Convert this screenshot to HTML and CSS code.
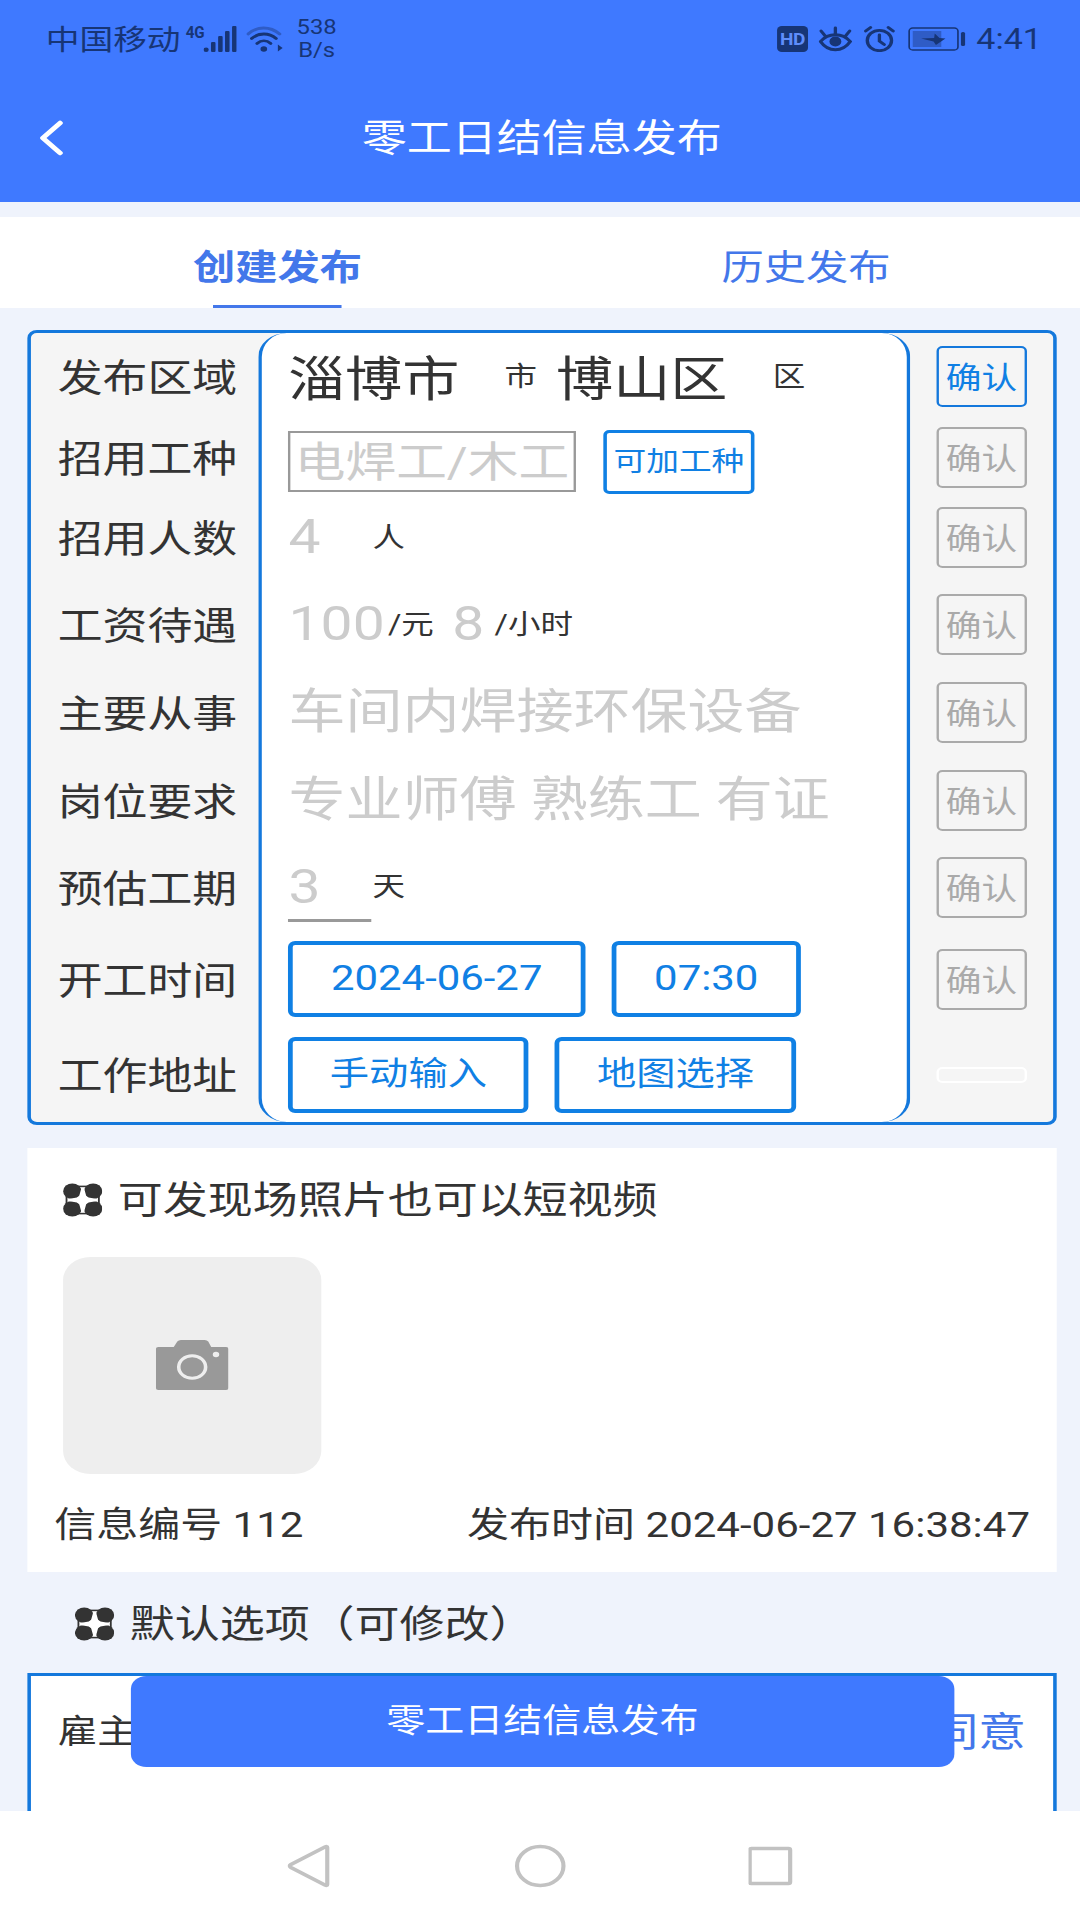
FILE: index.html
```html
<!DOCTYPE html>
<html lang="zh-CN">
<head>
  <meta charset="UTF-8">
  <title>零工日结信息发布</title>
  <meta name="viewport" content="width=device-width, initial-scale=1">
  <link rel="stylesheet" href="styles.css">
</head>
<body>
  <svg class="defs" width="0" height="0">
    <symbol id="clover" viewBox="0 0 34 34">
      <rect x="3" y="3" width="28" height="28" fill="#fff" stroke="#333" stroke-width="1.6"/>
      <circle cx="8" cy="8" r="8"/><circle cx="26" cy="8" r="8"/>
      <circle cx="8" cy="26" r="8"/><circle cx="26" cy="26" r="8"/>
      <path d="M15.8 5h2.4l1.8 7.5 2 2 7.500 1.500v2l-7.500 1.500-2 2-1.800 7.500h-2.400l-1.800-7.500-2-2L4.500 18v-2l7.500-1.500 2-2z" fill="#fff"/>
    </symbol>
  </svg>

  <div class="page">
    <!-- 状态栏 -->
    <div class="status">
      <span class="carrier">中国移动</span>
      <span class="net">4G</span>
      <svg class="signal" width="28" height="26" viewBox="0 0 28 26">
        <circle cx="2.2" cy="23.8" r="2.2"/>
        <rect x="6.3" y="16" width="3.8" height="10" rx="1"/>
        <rect x="12.3" y="10" width="3.8" height="16" rx="1"/>
        <rect x="18.1" y="5" width="3.8" height="21" rx="1"/>
        <rect x="24" y="0" width="3.8" height="26" rx="1"/>
      </svg>
      <svg class="wifi" width="31" height="26" viewBox="0 0 31 26">
        <g fill="none" stroke-width="2.8" stroke-linecap="round">
          <path d="M1.5 8C9 0 20 0 28 8" stroke="#2f5cc6"/>
          <path d="M4.5 12.5C10.5 6.5 19 6.5 25 12.5" stroke="#173576"/>
          <path d="M9 17.5c3.5-3.5 8-3.5 11.5 0" stroke="#173576"/>
        </g>
        <circle cx="14.7" cy="23" r="2.8"/>
        <path d="M26.5 18.5v7l4-3.5z"/>
      </svg>
      <span class="speed">538<br>B/s</span>
      <div class="status-right">
        <span class="hd">HD</span>
        <svg width="28" height="26" viewBox="0 0 28 26">
          <g fill="none" stroke="#173576" stroke-width="2.8" stroke-linecap="round">
            <path d="M1.5 15.5C8 6.5 20 6.5 26.5 15.5 20 26.5 8 26.5 1.5 15.5z"/>
            <path d="M14 8V2M5.5 10L2 5M22.5 10L26 5"/>
          </g>
          <circle cx="14" cy="15.5" r="5"/>
        </svg>
        <svg width="26" height="26" viewBox="0 0 26 26" fill="none" stroke="#173576" stroke-width="2.8" stroke-linecap="round">
          <circle cx="13" cy="14.5" r="10.2"/>
          <path d="M13 9v6l4 3.5M1.5 5l4-3.5M24.5 5l-4-3.5"/>
        </svg>
        <svg class="battery" width="49" height="26" viewBox="0 0 49 26">
          <rect x="1" y="2" width="41" height="22" rx="3" fill="none" stroke="#173576" stroke-width="1.4"/>
          <rect x="4" y="5" width="24" height="16" fill="#2f5cc6"/>
          <path d="M11 12.500l11-.5.5-4.500 4 4.500 5 .5-8 6.500-2-3.500z"/>
          <rect x="44.5" y="6" width="3.5" height="14" rx="1.5"/>
        </svg>
        <span class="clock">4:41</span>
      </div>
    </div>

    <div class="header">
      <svg class="back" width="20" height="36" viewBox="0 0 20 36" fill="none" stroke="#fff" stroke-width="4.5" stroke-linecap="round" stroke-linejoin="round">
        <path d="M17.5 3L3 18l14.5 15"/>
      </svg>
      <h1>零工日结信息发布</h1>
    </div>

    <div class="tabs">
      <div class="tab active">创建发布</div>
      <div class="tab">历史发布</div>
    </div>

    <div class="content">
      <div class="form-card">
        <div class="col labels">
          <div>发布区域</div>
          <div>招用工种</div>
          <div>招用人数</div>
          <div>工资待遇</div>
          <div>主要从事</div>
          <div>岗位要求</div>
          <div>预估工期</div>
          <div>开工时间</div>
          <div>工作地址</div>
        </div>
        <div class="col fields">
          <div><span class="value city">淄博市</span><span class="unit">市</span><span class="value district">博山区</span><span class="unit">区</span></div>
          <div><span class="job-input">电焊工/木工</span><span class="add-btn">可加工种</span></div>
          <div><span class="hint num">4</span><span class="unit">人</span></div>
          <div><span class="hint num wage">100</span><span class="unit">/元</span><span class="hint num hours">8</span><span class="unit">/小时</span></div>
          <div><span class="hint">车间内焊接环保设备</span></div>
          <div><span class="hint">专业师傅 熟练工 有证</span></div>
          <div><span class="hint num line">3</span><span class="unit">天</span></div>
          <div><span class="pick">2024-06-27</span><span class="pick time">07:30</span></div>
          <div><span class="pick addr">手动输入</span><span class="pick addr">地图选择</span></div>
        </div>
        <div class="col confirms">
          <div><span class="ok on">确认</span></div>
          <div><span class="ok">确认</span></div>
          <div><span class="ok">确认</span></div>
          <div><span class="ok">确认</span></div>
          <div><span class="ok">确认</span></div>
          <div><span class="ok">确认</span></div>
          <div><span class="ok">确认</span></div>
          <div><span class="ok">确认</span></div>
          <div><span class="ok empty"></span></div>
        </div>
      </div>

      <div class="media-card">
        <div class="section-title"><svg class="clover" width="33" height="34"><use href="#clover"/></svg>可发现场照片也可以短视频</div>
        <div class="upload">
          <svg width="61" height="50" viewBox="0 0 61 50">
            <path d="M2 7h13l3-5.5Q19 0 21 0h20q2 0 3 1.5L46.5 7H59q2 0 2 2v39q0 2-2 2H2q-2 0-2-2V9q0-2 2-2z" fill="#999"/>
            <circle cx="30.5" cy="27" r="11.3" fill="none" stroke="#eee" stroke-width="3"/>
            <circle cx="50.5" cy="14.5" r="2.7" fill="#eee"/>
          </svg>
        </div>
        <div class="meta"><span>信息编号 112</span><span>发布时间 2024-06-27 16:38:47</span></div>
      </div>

      <div class="section-title options-title"><svg class="clover" width="33" height="34"><use href="#clover"/></svg>默认选项（可修改）</div>
      <div class="options-card">
        <span class="owner">雇主</span>
        <span class="agree">同意</span>
        <div class="submit">零工日结信息发布</div>
      </div>
    </div>

    <div class="navbar">
      <svg width="38" height="44" viewBox="0 0 38 44"><path d="M34 3.5v37q0 1.5-2 .5L3.5 23.5q-2-1.5 0-3L32 3q2-1 2 .5z"/></svg>
      <svg width="44" height="44" viewBox="0 0 44 44"><circle cx="22" cy="22" r="19.5"/></svg>
      <svg width="38" height="44" viewBox="0 0 38 44"><rect x="1" y="4.5" width="34" height="35" rx="1.5"/></svg>
    </div>
  </div>
</body>
</html>
```
FILE: styles.css
```css
* { box-sizing: border-box; }
body {
  margin: 0; width: 1080px; height: 1920px; overflow: hidden;
  font-family: Roboto, "Noto Sans CJK SC", sans-serif;
  background: #fff; color: #333;
}
.defs { position: absolute; }
/* 整页横向拉伸 */
.page {
  width: 907.56px; height: 1920px;
  transform: scaleX(1.19); transform-origin: 0 0;
  display: flex; flex-direction: column;
  background: #eff3fc;
}

.status {
  height: 78px; padding: 0 32px 0 38.5px; flex-shrink: 0;
  display: flex; align-items: center;
  background: #3f79ff; color: #173576; fill: #173576;
}
.carrier { font-size: 28.3px; margin-top: -4px; }
.net {
  font-size: 17px; font-weight: bold; width: 15px; margin: -15px 0 0 4px;
  transform: scaleX(0.75); transform-origin: 0 50%;
}
.wifi { margin-left: 8px; }
.speed { font-size: 20px; line-height: 23px; margin: -1px 0 0 11.5px; text-align: center; }
.status-right { margin-left: auto; display: flex; align-items: center; gap: 9.5px; }
.hd {
  width: 26px; height: 26px; border-radius: 4px; background: #173576; color: #5f8dfa;
  font-size: 16px; font-weight: bold; line-height: 27px; text-align: center; letter-spacing: -0.5px;
}
.battery { margin-left: 1.5px; }
.clock { font-size: 28.6px; margin-left: -1px; }

.header {
  height: 124px; padding: 0 33px; flex-shrink: 0; position: relative;
  background: #3f79ff; color: #fff;
  display: flex; justify-content: center;
}
.back { position: absolute; left: 33px; top: 42px; }
h1 { margin: 0 0 0 3px; font-size: 37.8px; font-weight: normal; line-height: 121px; }

.tabs {
  height: 91px; margin-top: 15px; padding: 0 8px 0 11px; flex-shrink: 0;
  display: flex; background: #fff; color: #4377ea;
}
.tab { flex: 1; text-align: center; font-size: 35.5px; line-height: 103px; }
.tab.active { font-weight: bold; }
.tab.active::after {
  content: ""; display: block; width: 108px; height: 3px; margin: -15px auto 0; background: #4377ea;
}

.content { flex: 1; padding: 22px 19.5px 0 22.5px; overflow: hidden; }
.form-card {
  height: 795px; border: 3px solid #1478dc; border-radius: 8px;
  display: grid; grid-template-columns: 191.5px 1fr 120.5px;
  background: #f5f5f5;
}
.col { display: grid; grid-template-rows: 88px 73px 88px 86px 89px 87px 87px 97px 94px; }
.col > div { display: flex; align-items: center; white-space: nowrap; }
.labels { padding-left: 23px; font-size: 37.7px; }
.labels > div { padding-bottom: 5px; }
.fields {
  background: #fff; border-radius: 24px; padding-left: 22px;
  border-left: 3px solid #1478dc; border-right: 3px solid #1478dc;
}
.value { font-size: 48px; padding-bottom: 5px; }
.city { width: 182px; }
.district { width: 182px; margin-left: 16px; }
.unit { font-size: 27.3px; margin-top: -7px; }
.hint { font-size: 47.9px; color: #ccc; margin-top: -11px; padding-left: 0.5px; }
.num { width: 57px; margin: -2px 14px 0 0; flex-shrink: 0; }
.num.line {
  width: 70px; height: 65px; margin: 3px 1px 0 0; line-height: 60px;
  border-bottom: 3px solid #999;
}
.num.wage { width: 84px; margin-right: 0; }
.num.hours { margin: -2px 0 0 15px; width: 36px; }
.job-input {
  width: 242px; height: 61px; margin-top: 8px; border: 2.5px solid #999;
  font-size: 42.6px; line-height: 58px; text-align: center; color: #ccc;
}
.add-btn {
  width: 127px; height: 64px; margin: 9px 0 0 23px;
  border: 3px solid #1080e4; border-radius: 5px;
  color: #1080e4; font-size: 27.5px; line-height: 58px; text-align: center;
}
.pick {
  width: 250px; height: 76px; margin: -1px 22px 0 0;
  border: 4px solid #1080e4; border-radius: 6px;
  color: #1080e4; font-size: 35.2px; line-height: 67px; text-align: center;
}
.time { width: 159px; }
.addr { width: 202.4px; font-size: 33px; line-height: 65px; }
.confirms > div { justify-content: center; }
.ok {
  width: 76px; height: 61px; margin-top: -1px; border: 2.5px solid #aaa; border-radius: 5px;
  font-size: 30px; line-height: 59px; text-align: center; color: #aaa;
}
.ok.on { color: #1080e4; border-color: #1478dc; }
.ok.empty { height: 16px; border-color: #fff; }

.media-card {
  height: 424px; margin: 23px 0 0; padding: 29px 23px 0 30.5px; background: #fff;
}
.section-title { font-size: 37.8px; line-height: 46px; display: flex; align-items: center; }
.clover { margin-right: 13px; fill: #333; }
.upload {
  width: 217px; height: 217px; margin-top: 34px; padding-bottom: 2px; border-radius: 23px; background: #eee;
  display: flex; align-items: center; justify-content: center;
}
.meta {
  display: flex; justify-content: space-between; margin: 26px -0.5px 0 -7.5px;
  font-size: 35.3px; line-height: 51px;
}
.options-title { margin: 29px 0 0 40.5px; }
.options-card {
  height: 240px; margin-top: 26px; padding: 0 30px 0 23px; position: relative;
  border: 3px solid #1478dc; background: #fff;
  display: flex; justify-content: space-between;
}
.owner { font-size: 33.3px; line-height: 112px; }
.agree { font-size: 40px; line-height: 114px; color: #4377ea; margin-right: -7px; }
.submit {
  position: absolute; left: 84.5px; top: 0; width: 691.5px; height: 91px;
  border-radius: 13px; background: #3f79ff; color: #fff;
  font-size: 32.8px; line-height: 91px; text-align: center;
}

.navbar {
  height: 109px; flex-shrink: 0; background: #fff;
  display: flex; align-items: center; justify-content: center; gap: 153px;
}
.navbar svg { fill: none; stroke: #c2c2c2; stroke-width: 3.5; }
```
